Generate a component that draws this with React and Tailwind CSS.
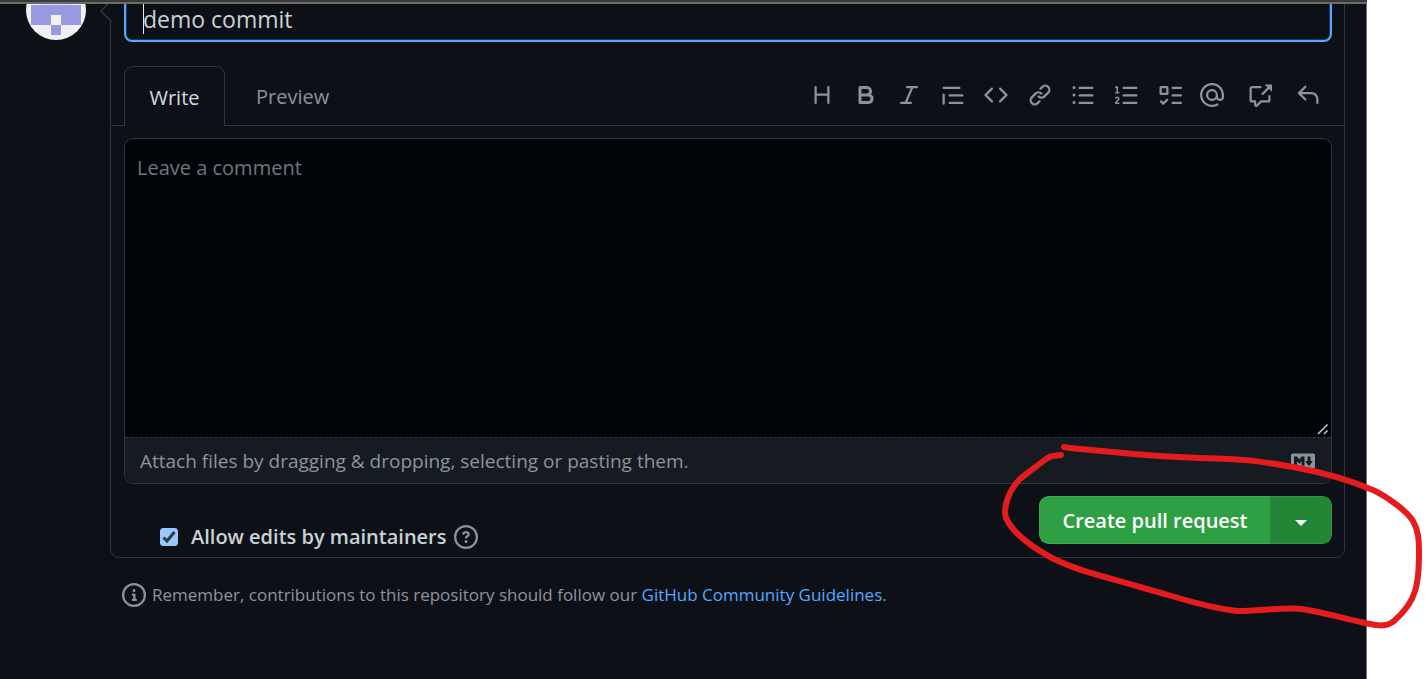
const icons = {
  heading: 'M3.75 2a.75.75 0 01.75.75V7h7V2.75a.75.75 0 011.5 0v10.5a.75.75 0 01-1.5 0V8.5h-7v4.75a.75.75 0 01-1.5 0V2.75A.75.75 0 013.75 2z',
  bold: 'M4 2h4.5a3.501 3.501 0 0 1 2.852 5.53A3.499 3.499 0 0 1 9.5 14H4a1 1 0 0 1-1-1V3a1 1 0 0 1 1-1Zm1 7v3h4.5a1.5 1.5 0 0 0 0-3Zm3.5-2a1.5 1.5 0 0 0 0-3H5v3Z',
  italic: 'M6 2.75A.75.75 0 0 1 6.75 2h6.5a.75.75 0 0 1 0 1.5h-2.505l-3.858 9H9.25a.75.75 0 0 1 0 1.5h-6.5a.75.75 0 0 1 0-1.5h2.505l3.858-9H6.75A.75.75 0 0 1 6 2.75Z',
  quote: 'M1.75 2.5h10.5a.75.75 0 0 1 0 1.5H1.75a.75.75 0 0 1 0-1.5Zm4 5h8.5a.75.75 0 0 1 0 1.5h-8.5a.75.75 0 0 1 0-1.5Zm0 5h8.5a.75.75 0 0 1 0 1.5h-8.5a.75.75 0 0 1 0-1.5ZM2.5 7.75v6a.75.75 0 0 1-1.5 0v-6a.75.75 0 0 1 1.5 0Z',
  code: 'M4.72 3.22a.75.75 0 011.06 1.06L2.06 8l3.72 3.72a.75.75 0 11-1.06 1.06L.47 8.53a.75.75 0 010-1.06l4.25-4.25zm6.56 0a.75.75 0 10-1.06 1.06L13.94 8l-3.72 3.72a.75.75 0 101.06 1.06l4.25-4.25a.75.75 0 000-1.06l-4.25-4.25z',
  link: 'M7.775 3.275a.75.75 0 001.06 1.06l1.25-1.25a2 2 0 112.83 2.83l-2.5 2.5a2 2 0 01-2.83 0 .75.75 0 00-1.06 1.06 3.5 3.5 0 004.95 0l2.5-2.5a3.5 3.5 0 00-4.95-4.95l-1.25 1.25zm-4.69 9.64a2 2 0 010-2.83l2.5-2.5a2 2 0 012.83 0 .75.75 0 001.06-1.06 3.5 3.5 0 00-4.95 0l-2.5 2.5a3.5 3.5 0 004.95 4.95l1.25-1.25a.75.75 0 00-1.06-1.06l-1.25 1.25a2 2 0 01-2.83 0z',
  ul: 'M2 4a1 1 0 100-2 1 1 0 000 2zm3.75-1.5a.75.75 0 000 1.5h8.5a.75.75 0 000-1.5h-8.5zm0 5a.75.75 0 000 1.5h8.5a.75.75 0 000-1.5h-8.5zm0 5a.75.75 0 000 1.5h8.5a.75.75 0 000-1.5h-8.5zM3 8a1 1 0 11-2 0 1 1 0 012 0zm-1 6a1 1 0 100-2 1 1 0 000 2z',
  ol: 'M2.003 2.5a.5.5 0 00-.723-.447l-1.003.5a.5.5 0 00.446.895l.28-.14V6H.5a.5.5 0 000 1h2.006a.5.5 0 100-1h-.503V2.5zM5 3.25a.75.75 0 01.75-.75h8.5a.75.75 0 010 1.5h-8.5A.75.75 0 015 3.25zm0 5a.75.75 0 01.75-.75h8.5a.75.75 0 010 1.5h-8.5A.75.75 0 015 8.25zm0 5a.75.75 0 01.75-.75h8.5a.75.75 0 010 1.5h-8.5a.75.75 0 01-.75-.75zM.924 10.32l.003-.004a.851.851 0 01.144-.153A.66.66 0 011.5 10c.195 0 .306.068.374.146a.57.57 0 01.128.376c0 .453-.269.682-.8 1.078l-.035.025C.692 11.98 0 12.495 0 13.5a.5.5 0 00.5.5h2.003a.5.5 0 000-1H1.146c.132-.197.351-.372.654-.597l.047-.035c.47-.35 1.156-.858 1.156-1.845 0-.365-.118-.744-.377-1.038-.268-.303-.658-.484-1.126-.484-.48 0-.84.202-1.068.392a1.858 1.858 0 00-.348.384l-.007.011-.002.004-.001.002-.001.001a.5.5 0 00.851.525z',
  tasks: 'M2.5 3.5v3h3v-3h-3zM2 2a1 1 0 00-1 1v4a1 1 0 001 1h4a1 1 0 001-1V3a1 1 0 00-1-1H2zm4.655 8.595a.75.75 0 010 1.06L4.03 14.28a.75.75 0 01-1.06 0l-1.5-1.5a.75.75 0 111.06-1.06l.97.97 2.095-2.095a.75.75 0 011.06 0zM9.75 2.5a.75.75 0 000 1.5h5.5a.75.75 0 000-1.5h-5.5zm0 5a.75.75 0 000 1.5h5.5a.75.75 0 000-1.5h-5.5zm0 5a.75.75 0 000 1.5h5.5a.75.75 0 000-1.5h-5.5z',
  mention: 'M4.75 2.37a6.5 6.5 0 006.5 11.26.75.75 0 01.75 1.298 8 8 0 113.994-7.273.754.754 0 01.006.095v1.5a2.75 2.75 0 01-5.072 1.475A4 4 0 1112 8v1.25a1.25 1.25 0 002.5 0V7.867a6.5 6.5 0 00-9.75-5.496V2.37zM10.5 8a2.5 2.5 0 10-5 0 2.5 2.5 0 005 0z',
  crossReference: 'M16 1.25v4.146a.25.25 0 01-.427.177L14.03 4.03l-3.75 3.75a.75.75 0 11-1.06-1.06l3.75-3.75-1.543-1.543A.25.25 0 0111.604 1h4.146a.25.25 0 01.25.25zM2.75 3.5a.25.25 0 00-.25.25v7.5c0 .138.112.25.25.25h2a.75.75 0 01.75.75v2.19l2.72-2.72a.75.75 0 01.53-.22h4.5a.25.25 0 00.25-.25v-2.5a.75.75 0 111.5 0v2.5A1.75 1.75 0 0113.25 13H9.06l-2.573 2.573A1.457 1.457 0 014 14.543V13H2.75A1.75 1.75 0 011 11.25v-7.5C1 2.784 1.784 2 2.75 2h5.5a.75.75 0 010 1.5h-5.5z',
  reply: 'M6.78 1.97a.75.75 0 010 1.06L3.81 6h6.44A4.75 4.75 0 0115 10.75v2.5a.75.75 0 01-1.5 0v-2.5a3.25 3.25 0 00-3.25-3.25H3.81l2.97 2.97a.75.75 0 11-1.06 1.06L1.47 7.28a.75.75 0 010-1.06l4.25-4.25a.75.75 0 011.06 0z',
  question: 'M8 1.5a6.5 6.5 0 100 13 6.5 6.5 0 000-13zM0 8a8 8 0 1116 0A8 8 0 010 8zm9 3a1 1 0 11-2 0 1 1 0 012 0zM6.92 6.085c.081-.16.19-.299.34-.398.145-.097.371-.187.74-.187.28 0 .553.087.738.225A.613.613 0 019 6.25c0 .177-.04.264-.077.318a.956.956 0 01-.277.245c-.076.051-.158.1-.258.161l-.007.004a7.728 7.728 0 00-.313.195 2.416 2.416 0 00-.692.661.75.75 0 001.248.832.956.956 0 01.276-.245 6.3 6.3 0 01.26-.16l.006-.004c.093-.057.204-.123.313-.195.222-.149.487-.355.692-.662.214-.32.329-.702.329-1.15 0-.76-.36-1.348-.863-1.725A2.76 2.76 0 008 4c-.631 0-1.155.16-1.572.438-.413.276-.68.638-.849.977a.75.75 0 101.342.67z',
  info: 'M8 1.5a6.5 6.5 0 100 13 6.5 6.5 0 000-13zM0 8a8 8 0 1116 0A8 8 0 010 8zm6.5-.25A.75.75 0 017.25 7h1a.75.75 0 01.75.75v2.75h.25a.75.75 0 010 1.5h-2a.75.75 0 010-1.5h.25v-2h-.25a.75.75 0 01-.75-.75zM8 6a1 1 0 100-2 1 1 0 000 2z',
  markdown: 'M14.85 3H1.15C.52 3 0 3.52 0 4.15v7.69C0 12.48.52 13 1.15 13h13.69c.64 0 1.15-.52 1.15-1.15v-7.7C16 3.52 15.48 3 14.85 3zM9 11H7V8L5.5 9.92 4 8v3H2V5h2l1.5 2L7 5h2v6zm2.99.5L9.5 8H11V5h2v3h1.5l-2.51 3.5z',
};

function Icon({ name }) {
  return (
    <svg viewBox="0 0 16 16" className="block size-6 shrink-0" fill="currentColor" fillRule="evenodd" aria-hidden="true">
      <path d={icons[name]} />
    </svg>
  );
}

const formatTools = [
  ['heading', 'Heading'],
  ['bold', 'Bold'],
  ['italic', 'Italic'],
  ['quote', 'Quote'],
  ['code', 'Code'],
  ['link', 'Link'],
  ['ul', 'Bulleted list'],
  ['ol', 'Numbered list'],
  ['tasks', 'Task list'],
];

const referenceTools = [
  ['mention', 'Mention'],
  ['crossReference', 'Reference'],
  ['reply', 'Saved replies'],
];

function ToolGroup({ tools, className }) {
  return (
    <div className={'flex justify-between ' + className}>
      {tools.map(([name, label]) => (
        <button key={name} type="button" aria-label={label}>
          <Icon name={name} />
        </button>
      ))}
    </div>
  );
}

function Avatar() {
  return (
    <svg viewBox="0 0 60 60" className="size-[60px] shrink-0 rounded-full bg-[#f0f0f0]" fill="#9899e0" aria-hidden="true">
      <path d="M5 5h50v10H45v10h10v20H35V35H25v10H5V25h10V15H5z" />
      <path d="M25 45h10v10H25z" />
      <path d="M15 24.300h30" stroke="#f0f0f0" strokeWidth="1" />
    </svg>
  );
}

function Annotation() {
  return (
    <svg
      viewBox="0 0 430 200"
      className="pointer-events-none absolute right-0 top-[440px] h-[200px] w-[430px]"
      fill="none"
      stroke="#e51c1e"
      strokeWidth="6"
      strokeLinecap="round"
      strokeLinejoin="round"
      aria-hidden="true"
    >
      <path d="M69 7C80 9 98 10 118 12C155 16 175 17 205 18C250 19 265 21 298 27C320 31 350 38 378 50C391 56 412 71 418 81C423 90 424 98 424 113C424 130 423 142 420 151C417 162 408 173 399 181C391 188 380 185 370 183C350 179 328 172 307 169C289 167 265 171 242 171C225 169 200 163 180 157L145 147C100 134 85 131 68 123C55 118 46 112 36 105C22 95 15 87 11 78C8 68 13 51 25 39C32 33 42 26 51 19C56 15 60 16 66 15" />
    </svg>
  );
}

export default function App() {
  return (
    <div className="relative min-h-screen overflow-hidden bg-white pr-[58px] font-['Open_Sans','Noto_Sans',sans-serif] text-[#8b949e]">
      <div className="absolute inset-x-0 top-0 z-10 mr-[58px] h-1 border-b-2 border-[#6a6a6a] bg-[#3a3a3a]" />
      <main className="min-h-screen overflow-hidden border-r border-[#6e7681] bg-[#0d1117]">
        <div className="-mt-5 flex items-start pl-[26px] pr-[21px]">
          <Avatar />
          <div className="ml-6 min-w-0 flex-1">
            <form className="relative rounded-[9px] border border-[#30363d]" onSubmit={(e) => e.preventDefault()}>
              <svg viewBox="0 0 12 26" className="absolute -left-[11px] top-[15px] h-[26px] w-3" aria-hidden="true">
                <path d="M11.5 4L1 15L11.5 25.500" fill="#0d1117" stroke="#30363d" strokeWidth="1.5" />
              </svg>
              <div className="pl-[13px] pr-3">
                <div className="relative">
                  <input
                    aria-label="Title"
                    defaultValue="demo commit"
                    className="mt-3 block h-[49px] w-full rounded-lg border-2 border-[#58a6ff] bg-[#0d1117] px-[17px] pt-0.5 text-[23px] text-[#c9d1d9] caret-transparent shadow-[inset_0_0_0_1px_#1c3a5e] outline-none"
                  />
                  <span className="absolute bottom-2 left-[19px] h-[30px] w-px bg-[#e6edf3]" />
                </div>
              </div>

              <div className="mt-6 flex items-end">
                <div className="w-[13px] self-end border-b border-[#30363d]" />
                <button type="button" className="h-[60px] w-[101px] rounded-t-[9px] border border-b-0 border-[#30363d] pt-0.5 text-[20px] text-[#d5dbe1]">
                  Write
                </button>
                <div className="flex h-[60px] min-w-0 flex-1 items-center border-b border-[#30363d] pb-0.5 pl-[31px] pr-6">
                  <button type="button" className="mr-auto pt-1 text-[20px]">
                    Preview
                  </button>
                  <ToolGroup tools={formatTools} className="w-[372px]" />
                  <ToolGroup tools={referenceTools} className="ml-[18px] w-[120px]" />
                </div>
              </div>

              <div className="pb-[5px] pl-[13px] pr-3 pt-3">
                <div className="overflow-hidden rounded-[9px] border border-[#30363d] bg-[#010409]">
                  <div className="relative">
                    <textarea
                      aria-label="Comment"
                      placeholder="Leave a comment"
                      className="block h-[298px] w-full resize-none bg-transparent px-3 py-[14px] text-[20px] leading-[30px] text-[#c9d1d9] outline-none placeholder:text-[#6e7681]"
                    />
                    <svg viewBox="0 0 12 12" className="absolute bottom-0.5 right-0.5 size-3" stroke="#c9c9c9" strokeWidth="1.5" aria-hidden="true">
                      <path d="M1 11L10.500 1.500M7 11L10.500 7.500" />
                    </svg>
                  </div>
                  <div className="flex h-[46px] items-center justify-between border-t border-dashed border-[#30363d] bg-[#161b22] pl-[15px] pr-4">
                    <p className="pt-0.5 text-[19px]">Attach files by dragging &amp; dropping, selecting or pasting them.</p>
                    <a href="#markdown" aria-label="Styling with Markdown is supported">
                      <Icon name="markdown" />
                    </a>
                  </div>
                </div>

                <div className="mt-3 flex items-start">
                  <div className="mt-[26px] flex h-[30px] items-center pl-9">
                    <span className="relative block size-[18px]">
                      <input
                        id="allow-edits"
                        type="checkbox"
                        defaultChecked
                        className="peer block size-[18px] appearance-none rounded-[3px] border border-[#8b949e] checked:border-[#99c8ff] checked:bg-[#99c8ff]"
                      />
                      <svg viewBox="0 0 18 18" className="pointer-events-none absolute inset-0 hidden peer-checked:block" fill="none" stroke="#2f3b48" strokeWidth="3" aria-hidden="true">
                        <path d="M3.500 9.500L7 13L14.500 4" />
                      </svg>
                    </span>
                    <label htmlFor="allow-edits" className="ml-[13px] text-[20px] font-semibold text-[#c9d1d9]">
                      Allow edits by maintainers
                    </label>
                    <button type="button" aria-label="About maintainer edits" className="ml-2">
                      <Icon name="question" />
                    </button>
                  </div>
                  <div className="ml-auto flex h-12 overflow-hidden rounded-[9px] text-white">
                    <button type="submit" className="w-[231px] rounded-l-[9px] border border-r-0 border-[#3fa650] bg-[#2ea043] pt-0.5 text-[20px] font-semibold">
                      Create pull request
                    </button>
                    <button type="button" aria-label="Select a type of pull request" className="flex w-[62px] items-center justify-center rounded-r-[9px] border border-l-0 border-[#369447] bg-[#238636]">
                      <svg viewBox="0 0 12 6" className="mt-1.5 h-1.5 w-3" fill="currentColor" aria-hidden="true">
                        <path d="M0 0h12L6 6z" />
                      </svg>
                    </button>
                  </div>
                </div>
              </div>
            </form>

            <p className="mt-6 flex items-center gap-1.5 pl-3 text-[17px] leading-[26px]">
              <Icon name="info" />
              <span>
                Remember, contributions to this repository should follow our{' '}
                <a href="#guidelines" className="text-[#58a6ff]">
                  GitHub Community Guidelines
                </a>
                .
              </span>
            </p>
          </div>
        </div>
      </main>
      <Annotation />
    </div>
  );
}
